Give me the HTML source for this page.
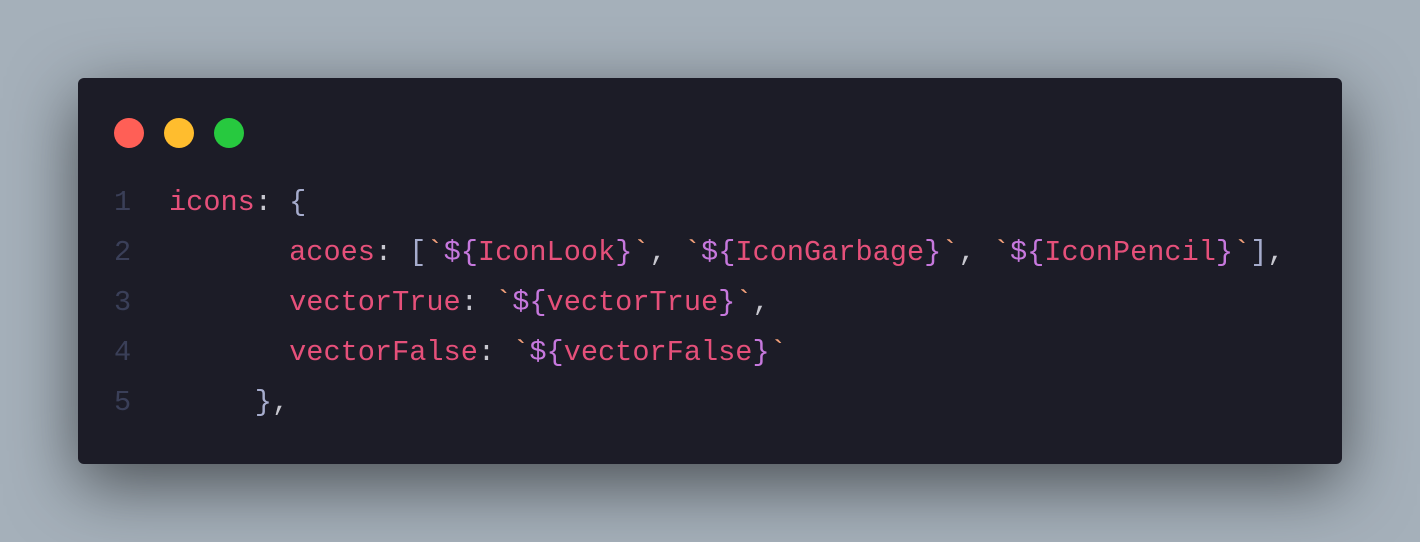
<!DOCTYPE html>
<html><head><meta charset="utf-8"><style>
html,body{margin:0;padding:0;}
body{width:1420px;height:542px;background:#a5b0ba;position:relative;overflow:hidden;}
.card{position:absolute;left:78px;top:78px;width:1264px;height:386px;background:#1c1c27;border-radius:6px;box-shadow:0 20px 68px rgba(0,0,0,0.55);}
.dot{position:absolute;top:40px;width:30px;height:30px;border-radius:50%;}
.code{position:absolute;left:0;top:100px;font-family:"Liberation Mono",monospace;font-size:28.6px;line-height:50px;white-space:pre;}
.ln{display:inline-block;width:91px;text-align:left;padding-left:36px;box-sizing:border-box;color:#3a3f58;}
.k{color:#e5507a}.p{color:#c8c8d0}.b{color:#a6accd}.t{color:#f3a07a}.d{color:#c678dd}
</style></head><body>
<div class="card">
<div class="dot" style="left:36px;background:#ff5f56"></div>
<div class="dot" style="left:86px;background:#ffbd2e"></div>
<div class="dot" style="left:136px;background:#27c93f"></div>
<div class="code"><div><span class="ln">1</span><span class="k">icons</span><span class="p">: </span><span class="b">{</span></div><div><span class="ln">2</span>       <span class="k">acoes</span><span class="p">: </span><span class="b">[</span><span class="t">`</span><span class="d">${</span><span class="k">IconLook</span><span class="d">}</span><span class="t">`</span><span class="p">, </span><span class="t">`</span><span class="d">${</span><span class="k">IconGarbage</span><span class="d">}</span><span class="t">`</span><span class="p">, </span><span class="t">`</span><span class="d">${</span><span class="k">IconPencil</span><span class="d">}</span><span class="t">`</span><span class="b">]</span><span class="p">,</span></div><div><span class="ln">3</span>       <span class="k">vectorTrue</span><span class="p">: </span><span class="t">`</span><span class="d">${</span><span class="k">vectorTrue</span><span class="d">}</span><span class="t">`</span><span class="p">,</span></div><div><span class="ln">4</span>       <span class="k">vectorFalse</span><span class="p">: </span><span class="t">`</span><span class="d">${</span><span class="k">vectorFalse</span><span class="d">}</span><span class="t">`</span></div><div><span class="ln">5</span>     <span class="b">}</span><span class="p">,</span></div></div>
</div>
</body></html>
